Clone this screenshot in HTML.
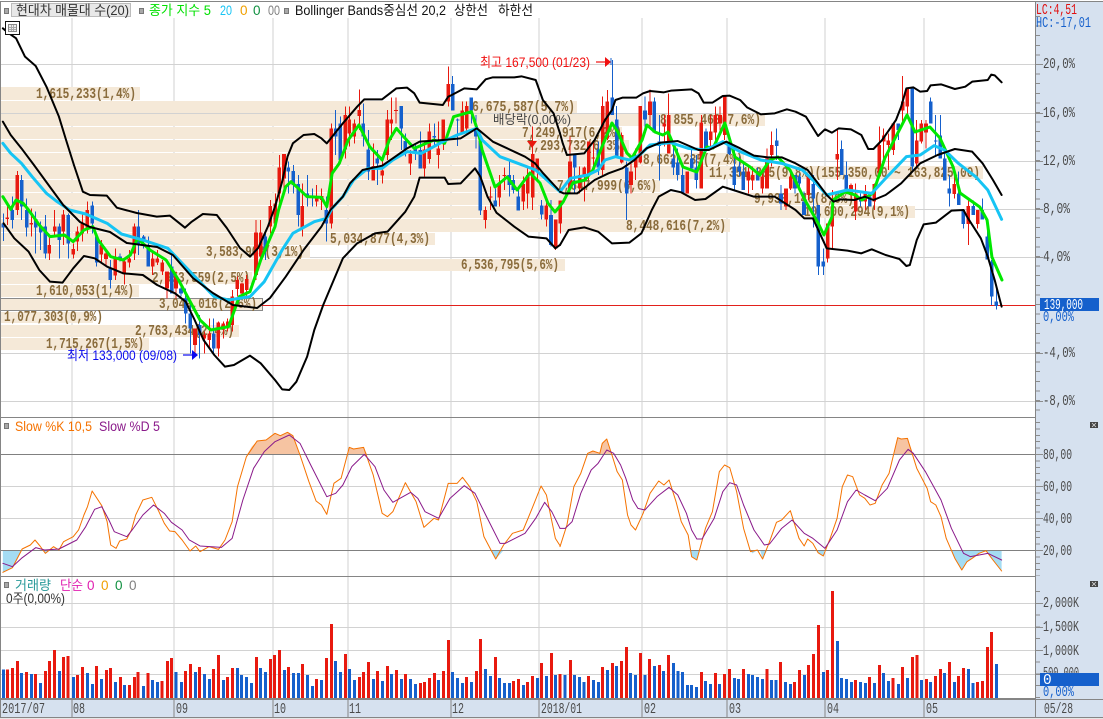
<!DOCTYPE html>
<html lang="ko"><head><meta charset="utf-8"><title>Chart</title>
<style>
html,body{margin:0;padding:0;background:#fff;width:1103px;height:719px;overflow:hidden}
svg{display:block;font-family:"Liberation Sans","Noto Sans CJK KR",sans-serif}
.v{font-family:"Liberation Mono",monospace;font-size:14.5px;font-weight:bold;fill:#8a6c3c}
.a{font-family:"Liberation Mono",monospace;font-size:14.5px;fill:#4a4a4a}
.l{fill:none;stroke-linejoin:round;stroke-linecap:round;vector-effect:non-scaling-stroke}
</style></head><body>
<svg width="1103" height="719" viewBox="0 0 1103 719" xmlns="http://www.w3.org/2000/svg">
<rect width="1103" height="719" fill="#fff"/>
<!-- grid -->
<g stroke="#d2d2d2" stroke-width="1" shape-rendering="crispEdges" fill="none">
<path d="M72 18V699M174 18V699M273 18V699M348 18V699M451 18V699M539 18V699M642 18V699M727 18V699M825 18V699M924 18V699"/>
<path d="M0 64.5H1035M0 113.5H1035M0 161.5H1035M0 209.5H1035M0 257.5H1035M0 353.5H1035M0 401.5H1035"/>
<path d="M0 486.5H1035M0 518.5H1035"/>
<path d="M0 603.5H1035M0 627.5H1035M0 650.5H1035M0 674.5H1035"/>
</g>
<!-- volume profile bands -->
<g fill="#f5e9d8" shape-rendering="crispEdges">
<rect x="1" y="87" width="139" height="13"/>
<rect x="1" y="101" width="576" height="12"/>
<rect x="1" y="114" width="764" height="12"/>
<rect x="1" y="127" width="621" height="12"/>
<rect x="1" y="140" width="628" height="12"/>
<rect x="1" y="153" width="743" height="12"/>
<rect x="1" y="166" width="982" height="13"/>
<rect x="1" y="180" width="659" height="12"/>
<rect x="1" y="193" width="853" height="12"/>
<rect x="1" y="206" width="914" height="12"/>
<rect x="1" y="219" width="729" height="13"/>
<rect x="1" y="233" width="434" height="12"/>
<rect x="1" y="246" width="309" height="12"/>
<rect x="1" y="259" width="564" height="12"/>
<rect x="1" y="272" width="251" height="12"/>
<rect x="1" y="285" width="138" height="12"/>
<rect x="1" y="298" width="262" height="13"/>
<rect x="1" y="312" width="92" height="11"/>
<rect x="1" y="325" width="238" height="12"/>
<rect x="1" y="338" width="148" height="12"/>
</g>
<rect x="0.5" y="298.5" width="262" height="12" fill="none" stroke="#8a8a8a" shape-rendering="crispEdges"/>
<path d="M262 305.5H1035" stroke="#e2211c" shape-rendering="crispEdges"/>
<!-- profile text -->
<g class="v">
<text x="36" y="98" textLength="100" lengthAdjust="spacingAndGlyphs">1,615,233(1,4%)</text>
<text x="472" y="111" textLength="103" lengthAdjust="spacingAndGlyphs">6,675,587(5,7%)</text>
<text x="660" y="124" textLength="101" lengthAdjust="spacingAndGlyphs">8,855,460(7,6%)</text>
<text x="522" y="137" textLength="100" lengthAdjust="spacingAndGlyphs">7,249,917(6,2%)</text>
<text x="527" y="150" textLength="99" lengthAdjust="spacingAndGlyphs">7,293,732(6,3%)</text>
<text x="643" y="164" textLength="100" lengthAdjust="spacingAndGlyphs">8,662,235(7,4%)</text>
<text x="709" y="177" textLength="271" lengthAdjust="spacingAndGlyphs">11,351,385(9,8%)(155,350,00 ~ 163,825,00)</text>
<text x="557" y="190" textLength="100" lengthAdjust="spacingAndGlyphs">7,647,999(6,6%)</text>
<text x="754" y="203" textLength="100" lengthAdjust="spacingAndGlyphs">9,933,146(8,6%)</text>
<text x="804" y="216" textLength="106" lengthAdjust="spacingAndGlyphs">10,600,294(9,1%)</text>
<text x="626" y="230" textLength="100" lengthAdjust="spacingAndGlyphs">8,448,616(7,2%)</text>
<text x="330" y="243" textLength="100" lengthAdjust="spacingAndGlyphs">5,034,877(4,3%)</text>
<text x="206" y="256" textLength="98" lengthAdjust="spacingAndGlyphs">3,583,903(3,1%)</text>
<text x="461" y="269" textLength="98" lengthAdjust="spacingAndGlyphs">6,536,795(5,6%)</text>
<text x="152" y="282" textLength="98" lengthAdjust="spacingAndGlyphs">2,953,559(2,5%)</text>
<text x="36" y="295" textLength="98" lengthAdjust="spacingAndGlyphs">1,610,053(1,4%)</text>
<text x="159" y="308" textLength="98" lengthAdjust="spacingAndGlyphs">3,049,016(2,6%)</text>
<text x="4" y="321" textLength="99" lengthAdjust="spacingAndGlyphs">1,077,303(0,9%)</text>
<text x="135" y="335" textLength="99" lengthAdjust="spacingAndGlyphs">2,763,434(2,4%)</text>
<text x="46" y="348" textLength="98" lengthAdjust="spacingAndGlyphs">1,715,267(1,5%)</text>
</g>
<text x="493" y="124" font-size="13" fill="#444" textLength="78" lengthAdjust="spacingAndGlyphs">배당락(0,00%)</text>
<!-- candles -->
<g transform="scale(.33333)" fill="none" shape-rendering="crispEdges">
<g transform="translate(0,495)">
<path stroke="#e8190f" stroke-width="3" d="M22 125V180M52 18V150M94 130V215M148 215V285M164 135V215M190 135V240M220 235V280M232 185V258M247 145V230M262 110V205M304 225V295M318 250V300M346 250V345M373 280V358M388 255V308M403 175V285M458 260V330M472 255V300M487 285V330M501 320V400M528 320V400M585 490V565M613 500V565M628 460V550M655 470V575M670 470V520M683 460V500M697 375V500M712 335V395M726 352V395M740 330V395M768 165V345M782 165V290"/>
<path stroke="#e8190f" stroke-width="11" d="M22 157V162M52 30V135M94 174V178M148 240V265M164 185V200M190 148V200M220 252V268M232 200V230M247 175V205M262 135V188M304 240V268M318 265V282M346 280V332M373 290V325M388 280V292M403 185V265M458 280V305M472 280V292M487 292V320M501 320V370M528 335V370M585 490V540M613 510V520M628 505V525M655 472V550M670 475V490M683 470V490M697 395V480M712 345V372M726 355V385M740 342V375M768 202V330M782 202V275"/>
<path stroke="#1560cc" stroke-width="3" d="M10 145V228M37 95V190M65 30V165M80 100V215M107 140V265M122 170V255M136 150V280M178 175V280M205 145V280M277 110V205M290 205V305M331 285V370M360 265V290M415 135V270M431 210V250M445 215V305M515 265V385M543 350V395M557 370V475M571 405V565M599 450V580M641 460V565"/>
<path stroke="#1560cc" stroke-width="11" d="M10 175V188M37 135V165M65 45V125M80 135V188M107 162V188M122 185V203M136 185V265M178 185V225M205 150V235M277 122V175M290 215V292M331 308V345M360 275V285M415 185V240M431 215V230M445 240V305M515 305V385M543 370V385M557 400V445M571 445V490M599 480V510M641 505V550"/>
</g>
<g transform="translate(780,180)">
<path stroke="#e8190f" stroke-width="3" d="M31 420V520M46 400V500M58 285V430M72 282V400M127 370V530M170 375V440M185 385V450M214 190V505M256 140V295M268 140V260M283 178V250M298 88V210M340 250V362M367 290V370M382 150V300M394 112V240M408 112V190M451 270V345M493 245V350M508 190V310M535 185V325M550 178V270M565 20V140M607 125V218M620 125V220M676 440V505M692 380V450M718 345V440M733 322V390M790 350V450M803 320V445"/>
<path stroke="#e8190f" stroke-width="11" d="M31 438V500M46 430V490M58 322V400M72 282V355M127 438V505M170 408V425M185 408V420M214 205V490M256 165V268M268 178V220M283 190V230M298 150V168M340 318V362M367 332V347M382 178V285M394 178V190M408 150V153M451 282V310M493 268V325M508 215V297M535 265V285M550 178V248M565 72V125M607 152V218M620 138V205M676 450V480M692 410V413M718 372V412M733 345V348M790 372V425M803 345V400"/>
<path stroke="#1560cc" stroke-width="3" d="M16 520V600M85 305V400M100 315V400M115 345V500M142 345V440M157 385V440M199 410V545M227 150V285M241 170V310M310 130V260M325 210V360M352 270V375M424 138V270M436 220V290M466 255V300M481 215V325M523 190V260M578 48V152M593 175V258M634 112V190M648 165V265M661 230V465M706 385V440M748 305V410M760 345V400M775 380V452"/>
<path stroke="#1560cc" stroke-width="11" d="M16 530V575M85 322V335M100 333V375M115 372V465M142 400V412M157 408V412M199 450V490M227 205V230M241 190V300M310 190V230M325 268V335M352 295V310M424 138V205M436 243V268M466 265V275M481 270V325M523 228V232M578 72V152M593 178V181M634 112V152M648 205V230M661 243V452M706 422V440M748 345V375M760 360V390M775 410V452"/>
</g>
<g transform="translate(1590,180)">
<path stroke="#e8190f" stroke-width="3" d="M8 200V450M22 295V360M49 425V500M77 480V570M91 425V520M120 230V400M149 320V400M163 320V425M176 245V360M190 240V320M218 110V345M232 90V240M275 218V310M303 305V400M317 265V360M331 138V310M360 88V200M403 165V260M416 100V280M472 335V400M514 165V385M542 165V270M556 140V240M570 140V220M584 110V240M655 320V400M668 320V390M697 335V400M711 265V385M725 215V320M768 385V450"/>
<path stroke="#e8190f" stroke-width="11" d="M8 282V412M22 295V335M49 437V478M77 478V565M91 422V490M120 305V385M149 345V385M163 322V345M176 245V345M190 293V296M218 138V330M232 125V235M275 225V308M303 335V375M317 295V322M331 138V308M360 125V165M403 190V200M416 165V280M472 335V400M514 188V385M542 215V240M556 165V218M570 165V190M584 110V225M655 335V362M668 345V362M697 350V385M711 295V385M725 255V285M768 385V440"/>
<path stroke="#1560cc" stroke-width="3" d="M35 420V478M63 420V560M134 285V400M205 245V345M247 0V165M260 138V292M290 305V480M345 110V210M373 112V218M388 165V362M430 250V345M443 265V362M458 320V400M485 265V325M499 285V385M528 205V270M598 245V285M613 255V395M628 290V350M640 308V390M683 322V362M740 205V300M753 375V450M795 345V400"/>
<path stroke="#1560cc" stroke-width="11" d="M35 437V463M63 465V555M134 285V322M205 268V322M247 112V165M260 178V292M290 322V400M345 152V178M373 125V218M388 245V258M430 295V322M443 308V345M458 345V400M485 295V325M499 322V360M528 215V270M598 245V282M613 320V375M628 320V335M640 335V390M683 345V362M740 242V258M753 400V430M795 345V385"/>
</g>
<g transform="translate(2370,210)">
<path stroke="#e8190f" stroke-width="3" d="M2 300V360M55 315V390M113 460V578M127 360V538M142 175V330M183 340V390M197 340V450M226 345V420M253 340V420M268 170V320M281 175V280M295 190V300M310 160V255M338 18V160M352 55V135M380 150V295M394 150V220M408 150V235M493 315V385M535 382V525M563 420V475"/>
<path stroke="#e8190f" stroke-width="11" d="M2 320V355M55 320V375M113 460V565M127 410V470M142 252V268M183 345V375M197 370V425M226 370V395M253 342V395M268 225V320M281 197V215M295 212V225M310 160V240M338 95V122M352 55V110M380 212V280M394 160V215M408 160V188M493 342V372M535 408V462M563 420V462"/>
<path stroke="#1560cc" stroke-width="3" d="M28 310V350M42 365V435M70 315V472M85 405V615M100 535V615M155 212V315M169 275V360M212 370V410M239 370V410M325 160V210M367 55V300M422 82V160M437 135V260M451 135V265M464 235V332M478 315V410M506 305V405M520 420V475M550 392V435M577 385V448M592 450V568M605 570V705M619 655V718"/>
<path stroke="#1560cc" stroke-width="11" d="M28 320V340M42 395V435M70 342V385M85 405V590M100 575V590M155 237V315M169 315V360M212 385V395M239 380V410M325 160V180M367 55V290M422 95V160M437 212V215M451 197V265M464 265V332M478 355V370M506 370V405M520 420V462M550 408V435M577 420V448M592 500V568M605 575V680M619 695V708"/>
</g>
</g>
<!-- red triangle mark -->
<path d="M527 141H537L532 148Z" fill="#e8190f"/>
<!-- bollinger / MA -->
<g transform="scale(.35714,.33333)">
<polyline class="l" stroke="#00e800" stroke-width="3" points="8,590 30,628 45,600 65,610 80,630 110,675 140,710 180,705 205,725 235,690 260,680 275,720 310,770 345,780 365,765 385,715 420,750 465,780 500,840 530,900 560,960 590,990 640,980 670,890 700,875 730,780 770,680 780,630 800,560 815,545 835,565 860,590 900,592 915,620 930,520 950,490 975,420 1005,375 1035,440 1070,480 1090,420 1110,385 1130,410 1160,445 1215,420 1245,430 1270,350 1320,335 1340,400 1350,450 1386,561 1420,531 1448,570 1484,519 1512,549 1534,609 1554,636 1568,618"/>
<polyline class="l" stroke="#16c4f4" stroke-width="3" points="8,430 30,460 60,490 90,530 130,580 160,605 195,630 240,642 300,670 340,702 400,720 470,745 510,790 550,835 600,890 640,900 700,890 740,845 790,750 820,700 880,665 915,655 930,625 960,590 990,540 1030,505 1070,505 1100,480 1140,455 1180,460 1240,425 1280,405 1335,385 1350,420 1400,470 1450,490 1500,510 1568,575"/>
<polyline class="l" stroke="#000" stroke-width="2" points="8,85 25,100 45,115 70,170 100,198 130,260 165,350 185,420 207,495 232,575 252,585 299,587 327,623 383,639 439,650 476,647 518,683 537,665 568,642 607,645 635,684 672,744 700,770 723,744 750,680 770,620 790,545 805,470 820,430 850,405 880,402 900,415 915,430 930,410 960,370 1000,320 1020,298 1070,298 1110,265 1140,263 1160,280 1175,308 1240,315 1255,290 1265,285 1300,265 1335,268 1360,238 1380,232 1440,232 1460,229 1500,240 1520,300 1550,340 1568,400"/>
<polyline class="l" stroke="#000" stroke-width="2" points="8,365 30,405 60,445 95,495 140,561 177,615 224,666 252,681 308,696 355,729 440,741 484,765 540,834 596,879 652,915 720,924 756,894 800,830 850,750 900,680 925,630 960,590 980,550 1015,510 1070,497 1100,475 1140,445 1175,425 1240,420 1290,415 1335,385 1380,425 1420,445 1470,470 1498,490 1521,520 1559,564 1568,575"/>
<polyline class="l" stroke="#000" stroke-width="2" points="10,670 40,715 80,755 110,810 140,845 175,848 205,805 235,768 265,775 300,800 345,820 400,825 440,855 490,880 520,905 545,960 570,1020 600,1065 630,1100 655,1095 700,1067 730,1090 770,1140 790,1168 810,1170 830,1145 860,1070 880,990 905,915 960,775 1000,730 1050,700 1085,695 1135,635 1160,590 1175,533 1245,533 1255,552 1290,550 1330,505 1345,530 1365,590 1390,638 1440,680 1480,710 1530,715 1555,745 1568,735"/>
</g>
<g transform="translate(560,0) scale(.34637,.33333)">
<polyline class="l" stroke="#00e800" stroke-width="3" points="0,618 9,606 37,549 72,540 95,510 121,441 150,369 167,396 193,459 208,474 237,420 251,375 274,396 297,405 312,396 355,501 395,516 424,441 442,444 476,369 505,471 549,501 577,525 606,480 629,471 664,510 707,600 745,669 762,705 785,651 788,600 823,576 852,585 872,600 904,579 938,474 1002,345 1025,396 1068,381 1097,414 1135,501 1155,579 1212,621 1233,660 1247,771 1276,840"/>
<polyline class="l" stroke="#16c4f4" stroke-width="3" points="0,575 30,535 80,525 110,510 130,480 160,470 200,480 230,465 260,435 320,428 370,445 420,450 470,425 520,455 580,480 640,490 700,510 740,550 770,585 830,570 900,580 940,535 1000,470 1040,465 1080,437 1110,450 1150,490 1200,530 1235,570 1275,658"/>
<polyline class="l" stroke="#000" stroke-width="2" points="0,400 8,430 20,465 70,460 100,420 130,360 150,330 160,300 180,293 220,293 240,280 260,273 300,277 320,272 380,268 400,280 415,308 440,308 470,288 490,287 520,300 540,322 580,343 620,340 655,328 680,335 710,350 745,408 765,388 785,398 805,385 840,388 870,405 890,447 905,447 930,420 970,360 985,320 1000,265 1020,262 1040,275 1060,273 1070,256 1100,253 1140,267 1170,260 1190,245 1235,240 1245,224 1255,226 1275,247"/>
<polyline class="l" stroke="#000" stroke-width="2" points="0,575 10,580 50,580 100,540 140,520 180,505 215,480 250,445 290,428 340,423 400,450 430,450 480,425 520,445 560,467 600,472 640,472 680,490 715,510 745,550 770,585 790,605 810,598 850,600 880,590 905,600 940,585 985,550 1040,490 1090,465 1140,447 1190,455 1220,490 1250,540 1275,585"/>
<polyline class="l" stroke="#000" stroke-width="2" points="0,735 25,690 70,682 110,695 150,730 200,728 235,700 265,630 285,590 320,570 350,577 390,600 420,597 470,560 500,570 560,590 620,590 680,630 705,655 730,655 770,745 830,752 870,760 900,748 940,765 980,777 1000,798 1010,795 1030,720 1050,673 1085,668 1130,632 1165,630 1175,650 1215,715 1235,770 1255,840 1275,920"/>
</g>
<!-- high/low labels -->
<text x="480" y="67" font-size="13.5" fill="#f01010" textLength="110" lengthAdjust="spacingAndGlyphs">최고 167,500 (01/23)</text>
<path d="M596 62H606" stroke="#f01010" stroke-width="1.2"/><path d="M605 57L611 62L605 67Z" fill="#f01010"/>
<path d="M611 58V65" stroke="#1560cc"/>
<text x="67" y="360" font-size="13.5" fill="#0a0aee" textLength="110" lengthAdjust="spacingAndGlyphs">최저 133,000 (09/08)</text>
<path d="M183 355H193" stroke="#0a0aee" stroke-width="1.2"/><path d="M192 350L198 355L192 360Z" fill="#0a0aee"/>
<!-- stochastic -->
<g transform="translate(0,415) scale(.35714,.33333)">
<g fill="#f6c4a2" stroke="none">
<polygon points="692,118 705,95 720,78 745,75 770,55 785,62 805,52 820,62 840,118"/>
<polygon points="975,118 978,97 990,102 1018,97 1028,118"/>
</g>
<g fill="#a4dcf3" stroke="none">
<polygon points="8,406 8,472 35,458 62,406"/>
<polygon points="120,406 127,415 140,406"/>
<polygon points="1375,406 1388,432 1410,406"/>
</g>
</g>
<g transform="translate(560,415) scale(.34637,.33333)">
<g fill="#f6c4a2" stroke="none">
<polygon points="80,118 85,112 95,108 115,115 122,85 135,72 150,118"/>
<polygon points="965,118 975,68 985,72 1003,70 1020,118"/>
</g>
<g fill="#a4dcf3" stroke="none">
<polygon points="375,406 380,425 395,435 402,406"/>
<polygon points="550,406 555,415 570,406"/>
<polygon points="578,406 585,432 598,406"/>
<polygon points="740,406 745,413 760,423 763,406"/>
<polygon points="1130,406 1140,430 1160,465 1175,440 1190,430 1210,415 1230,407 1250,435 1275,468 1275,406"/>
</g>
</g>
<path d="M0 454.5H1035M0 550.5H1035" stroke="#808080" shape-rendering="crispEdges"/>
<g transform="translate(0,415) scale(.35714,.33333)">
<polyline class="l" stroke="#f57200" stroke-width="1" points="8,472 35,458 62,402 85,390 98,375 112,393 127,415 150,395 165,405 178,380 205,365 220,345 235,300 245,275 258,228 285,272 300,320 310,390 325,400 335,378 355,372 368,345 380,300 400,255 425,247 445,290 460,325 475,348 490,350 510,375 532,408 548,393 560,410 585,395 612,403 630,375 650,320 665,215 690,125 720,78 745,75 770,55 785,62 805,52 820,62 840,120 865,200 885,258 900,270 915,298 935,205 955,190 978,97 990,102 1018,97 1045,180 1070,295 1085,305 1100,290 1135,203 1165,260 1187,337 1215,310 1228,315 1255,205 1280,205 1295,187 1315,215 1335,260 1355,365 1388,432 1410,390 1435,355 1465,345 1490,280 1515,213 1530,240 1555,370 1568,392"/>
<polyline class="l" stroke="#8a1a8a" stroke-width="1" points="8,445 35,455 60,430 100,398 125,405 165,402 215,375 240,335 265,283 285,275 305,315 320,350 355,365 370,345 400,300 430,270 460,295 480,322 510,345 530,375 560,393 620,397 650,370 680,255 710,160 740,110 770,80 810,60 840,85 870,150 915,245 940,235 960,210 985,155 1020,118 1050,155 1075,225 1100,262 1150,232 1170,250 1190,290 1228,310 1260,250 1300,212 1330,235 1360,300 1400,385 1415,385 1470,355 1500,310 1525,262 1545,290 1568,340"/>
</g>
<g transform="translate(560,415) scale(.34637,.33333)">
<polyline class="l" stroke="#f57200" stroke-width="1" points="0,395 20,330 40,215 60,175 80,115 95,108 115,115 122,85 135,72 150,120 165,170 180,195 195,300 205,330 218,345 240,295 260,235 285,198 300,210 315,195 335,260 350,320 370,360 380,425 395,435 420,340 440,290 460,170 475,150 490,158 510,230 530,340 550,410 570,405 585,432 605,380 625,322 640,315 665,287 690,370 705,393 715,372 730,385 745,413 760,423 780,370 800,310 815,215 830,180 845,185 865,240 880,250 895,270 910,265 930,210 950,175 975,68 985,72 1003,70 1030,160 1060,220 1070,260 1085,270 1100,305 1115,370 1140,430 1160,465 1175,440 1190,430 1210,415 1230,407 1250,435 1275,468"/>
<polyline class="l" stroke="#8a1a8a" stroke-width="1" points="0,340 15,340 35,320 60,235 90,165 110,145 135,105 155,115 175,150 190,190 210,255 225,280 245,285 280,245 315,217 340,240 365,295 380,345 395,372 410,372 445,310 470,230 490,203 510,210 530,270 560,345 590,390 605,387 640,340 670,315 705,355 730,370 765,400 800,345 830,260 855,225 880,240 910,257 945,220 980,135 1005,103 1020,115 1055,170 1100,255 1130,340 1165,415 1185,425 1210,420 1235,415 1275,435"/>
</g>
<!-- volume -->
<g transform="translate(0,575) scale(.35714,.33333)" fill="none" stroke-width="8.4" shape-rendering="crispEdges">
<path stroke="#1560cc" d="M10 283V370M60 294V370M88 297V370M113 324V370M166 288V370M206 306V370M245 294V370M259 327V370M284 312V370M323 321V370M348 330V370M402 333V370M427 315V370M441 321V370M493 291V370M508 321V370M547 291V370M572 297V370M586 312V370M626 315V370M665 279V370M676 300V370M690 306V370M704 324V370M729 279V370M743 291V370M796 285V370M822 294V370M836 294V370M861 300V370M875 333V370M900 315V370M939 258V370M953 291V370M978 282V370M992 315V370M1046 312V370M1071 318V370M1096 297V370M1124 312V370M1149 312V370M1163 327V370M1228 315V370M1267 291V370M1281 309V370M1295 324V370M1320 321V370M1359 282V370M1373 303V370M1398 309V370M1412 324V370M1426 324V370M1466 330V370M1505 309V370M1530 303V370M1556 300V370"/>
<path stroke="#e8190f" d="M21 283V370M35 279V370M49 258V370M74 291V370M99 297V370M127 288V370M139 258V370M152 225V370M178 246V370M191 243V370M217 300V370M231 276V370M270 273V370M298 285V370M309 279V370M337 306V370M362 330V370M376 306V370M387 291V370M415 294V370M454 318V370M469 258V370M480 249V370M519 288V370M533 267V370M558 276V370M598 282V370M612 240V370M637 306V370M651 279V370M718 246V370M757 252V370M768 240V370M782 225V370M808 276V370M847 267V370M886 312V370M914 249V370M928 147V370M967 237V370M1006 306V370M1018 291V370M1032 261V370M1057 288V370M1085 273V370M1110 285V370M1135 297V370M1177 324V370M1188 321V370M1202 309V370M1216 294V370M1242 288V370M1256 195V370M1306 306V370M1334 288V370M1345 192V370M1387 246V370M1438 318V370M1452 312V370M1477 321V370M1491 303V370M1516 264V370M1544 234V370"/>
</g>
<g transform="translate(560,575) scale(.34637,.33333)" fill="none" stroke-width="8.66" shape-rendering="crispEdges">
<path stroke="#1560cc" d="M15 300V370M42 300V370M56 306V370M70 321V370M97 315V370M111 321V370M137 285V370M163 273V370M204 294V370M218 300V370M245 300V370M273 273V370M299 288V370M327 264V370M340 288V370M353 291V370M368 330V370M380 330V370M394 336V370M420 318V370M434 327V370M461 327V370M504 309V370M516 312V370M544 297V370M556 300V370M570 306V370M584 312V370M610 315V370M624 315V370M651 321V370M665 327V370M706 300V370M761 291V370M801 198V370M813 309V370M827 312V370M841 321V370M867 321V370M882 324V370M908 324V370M934 294V370M948 318V370M977 327V370M1003 309V370M1044 315V370M1070 321V370M1110 294V370M1139 321V370M1179 282V370M1193 324V370M1260 267V370"/>
<path stroke="#e8190f" d="M0 297V370M30 255V370M82 303V370M122 276V370M151 264V370M177 258V370M192 216V370M232 234V370M258 252V370M287 270V370M313 240V370M408 291V370M449 294V370M475 297V370M489 282V370M530 282V370M597 282V370M636 261V370M677 321V370M691 285V370M717 270V370M732 237V370M746 150V370M772 285V370M787 48V370M853 315V370M893 306V370M922 270V370M962 309V370M989 276V370M1018 246V370M1030 240V370M1058 312V370M1084 303V370M1098 282V370M1124 261V370M1150 303V370M1165 279V370M1205 321V370M1220 318V370M1234 216V370M1246 171V370"/>
</g>
<!-- panel borders -->
<g stroke="#858585" shape-rendering="crispEdges" fill="none">
<path d="M0 1.5H1103M0 417.5H1035M0 576.5H1035M0.5 1V717M0 698.5H1035"/>
</g>
<!-- right axis -->
<rect x="1036" y="2" width="67" height="715" fill="#d6e1ef"/>
<rect x="0" y="699" width="1036" height="18" fill="#d6e1ef"/>
<path d="M0 699.5H1103M0 717.5H1103M1035.5 1V718M0.5 699V717M72 699V717M174 699V717M273 699V717M348 699V717M451 699V717M539 699V717M642 699V717M727 699V717M825 699V717M924 699V717" stroke="#858585" fill="none" shape-rendering="crispEdges"/>
<path d="M0 718.5H1103" stroke="#e6e6e6" shape-rendering="crispEdges"/>
<g stroke="#8c8c8c" fill="none" shape-rendering="crispEdges">
<path d="M1038 16V418" stroke-width="4" stroke-dasharray="1 8.6"/>
<path d="M1038 422V576" stroke-width="4" stroke-dasharray="1 5.4"/>
<path d="M1038 591V698" stroke-width="4" stroke-dasharray="1 10.75"/>
<path d="M1036 64.5H1043M1036 113.5H1043M1036 161.5H1043M1036 209.5H1043M1036 257.5H1043M1036 353.5H1043M1036 401.5H1043M1036 454.5H1043M1036 486.5H1043M1036 518.5H1043M1036 550.5H1043M1036 603.5H1043M1036 627.5H1043M1036 650.5H1043M1036 674.5H1043"/>
</g>
<text x="1036" y="14" font-size="15" font-family="Liberation Mono" fill="#e01010" textLength="41" lengthAdjust="spacingAndGlyphs">LC:4,51</text>
<text x="1036" y="27" font-size="15" font-family="Liberation Mono" fill="#1560cc" textLength="55" lengthAdjust="spacingAndGlyphs">HC:-17,01</text>
<g class="a">
<text x="1043" y="68" textLength="32" lengthAdjust="spacingAndGlyphs">20,0%</text>
<text x="1043" y="117" textLength="32" lengthAdjust="spacingAndGlyphs">16,0%</text>
<text x="1043" y="165" textLength="32" lengthAdjust="spacingAndGlyphs">12,0%</text>
<text x="1043" y="213" textLength="27" lengthAdjust="spacingAndGlyphs">8,0%</text>
<text x="1043" y="261" textLength="27" lengthAdjust="spacingAndGlyphs">4,0%</text>
<text x="1043" y="357" textLength="32" lengthAdjust="spacingAndGlyphs">-4,0%</text>
<text x="1043" y="405" textLength="32" lengthAdjust="spacingAndGlyphs">-8,0%</text>
<text x="1043" y="459" textLength="29" lengthAdjust="spacingAndGlyphs">80,00</text>
<text x="1043" y="491" textLength="29" lengthAdjust="spacingAndGlyphs">60,00</text>
<text x="1043" y="523" textLength="29" lengthAdjust="spacingAndGlyphs">40,00</text>
<text x="1043" y="555" textLength="29" lengthAdjust="spacingAndGlyphs">20,00</text>
<text x="1043" y="607" textLength="36" lengthAdjust="spacingAndGlyphs">2,000K</text>
<text x="1043" y="631" textLength="36" lengthAdjust="spacingAndGlyphs">1,500K</text>
<text x="1043" y="655" textLength="36" lengthAdjust="spacingAndGlyphs">1,000K</text>
<text x="1043" y="677" textLength="36" lengthAdjust="spacingAndGlyphs">500,000</text>
<text x="2" y="713" textLength="43" lengthAdjust="spacingAndGlyphs">2017/07</text>
<text x="73" y="713" textLength="12" lengthAdjust="spacingAndGlyphs">08</text><text x="176" y="713" textLength="12" lengthAdjust="spacingAndGlyphs">09</text><text x="274" y="713" textLength="12" lengthAdjust="spacingAndGlyphs">10</text><text x="349" y="713" textLength="12" lengthAdjust="spacingAndGlyphs">11</text><text x="452" y="713" textLength="12" lengthAdjust="spacingAndGlyphs">12</text>
<text x="541" y="713" textLength="41" lengthAdjust="spacingAndGlyphs">2018/01</text>
<text x="644" y="713" textLength="12" lengthAdjust="spacingAndGlyphs">02</text><text x="729" y="713" textLength="12" lengthAdjust="spacingAndGlyphs">03</text><text x="827" y="713" textLength="12" lengthAdjust="spacingAndGlyphs">04</text><text x="926" y="713" textLength="12" lengthAdjust="spacingAndGlyphs">05</text>
<text x="1044" y="713" textLength="29" lengthAdjust="spacingAndGlyphs">05/28</text>
</g>
<rect x="1040" y="298" width="59" height="13" fill="#1560cc"/>
<text x="1044" y="309" font-size="14.5" font-family="Liberation Mono" fill="#fff" textLength="39" lengthAdjust="spacingAndGlyphs">139,000</text>
<text x="1043" y="321" font-size="14.5" font-family="Liberation Mono" fill="#1560cc" textLength="31" lengthAdjust="spacingAndGlyphs">0,00%</text>
<rect x="1040" y="673" width="59" height="13" fill="#1560cc"/>
<text x="1043" y="684" font-size="14.5" font-family="Liberation Mono" fill="#fff">0</text>
<text x="1043" y="696" font-size="14.5" font-family="Liberation Mono" fill="#1560cc" textLength="31" lengthAdjust="spacingAndGlyphs">0,00%</text>
<!-- close icons -->
<rect x="1090" y="422" width="8" height="6" fill="#444"/><path d="M1092 423L1096 427M1096 423L1092 427" stroke="#ddd" stroke-width=".8"/>
<rect x="1090" y="581" width="8" height="6" fill="#444"/><path d="M1092 582L1096 586M1096 582L1092 586" stroke="#ddd" stroke-width=".8"/>
<!-- legends -->
<g fill="#a8a8a8" stroke="#777" shape-rendering="crispEdges">
<rect x="4.5" y="8.5" width="4" height="5"/><rect x="139.5" y="8.5" width="4" height="5"/><rect x="284.5" y="8.5" width="4" height="5"/>
<rect x="4.5" y="423.5" width="4" height="5"/><rect x="4.5" y="582.5" width="4" height="5"/>
</g>
<rect x="11.5" y="3.5" width="119" height="13" fill="#e8e8e8" stroke="#bcbcbc" shape-rendering="crispEdges"/>
<g font-size="13.5">
<text x="16" y="15" fill="#333" textLength="113" lengthAdjust="spacingAndGlyphs">현대차 매물대 수(20)</text>
<text x="149" y="15" fill="#00e000" textLength="62" lengthAdjust="spacingAndGlyphs">종가 지수 5</text>
<text x="220" y="15" fill="#16c4f4" textLength="12" lengthAdjust="spacingAndGlyphs">20</text>
<text x="240" y="15" fill="#f0a000">0</text>
<text x="253" y="15" fill="#109040">0</text>
<text x="268" y="15" fill="#808080" textLength="12" lengthAdjust="spacingAndGlyphs">00</text>
<text x="295" y="15" fill="#111" textLength="151" lengthAdjust="spacingAndGlyphs">Bollinger Bands중심선 20,2</text>
<text x="454" y="15" fill="#111" textLength="34" lengthAdjust="spacingAndGlyphs">상한선</text>
<text x="498" y="15" fill="#111" textLength="35" lengthAdjust="spacingAndGlyphs">하한선</text>
<text x="15" y="431" fill="#f57200" textLength="77" lengthAdjust="spacingAndGlyphs">Slow %K 10,5</text>
<text x="99" y="431" fill="#8a1a8a" textLength="61" lengthAdjust="spacingAndGlyphs">Slow %D 5</text>
<text x="15" y="590" fill="#2a9a9a" textLength="36" lengthAdjust="spacingAndGlyphs">거래량</text>
<text x="60" y="590" fill="#e020b0" textLength="23" lengthAdjust="spacingAndGlyphs">단순</text>
<text x="87" y="590" fill="#e020b0">0</text>
<text x="101" y="590" fill="#f0a000">0</text>
<text x="115" y="590" fill="#109040">0</text>
<text x="129" y="590" fill="#808080">0</text>
<text x="6" y="603" fill="#333" textLength="59" lengthAdjust="spacingAndGlyphs">0주(0,00%)</text>
</g>
<!-- table icon -->
<rect x="5.5" y="21.5" width="14" height="13" fill="#fff" stroke="#111" shape-rendering="crispEdges"/>
<rect x="8.5" y="24.5" width="8" height="7" fill="#eee" stroke="#888" stroke-width="1" shape-rendering="crispEdges"/>
<path d="M11.5 25V31M13.5 25V31M9 27.5H16M9 29.5H16" stroke="#aaa" shape-rendering="crispEdges"/>
</svg>
</body></html>
